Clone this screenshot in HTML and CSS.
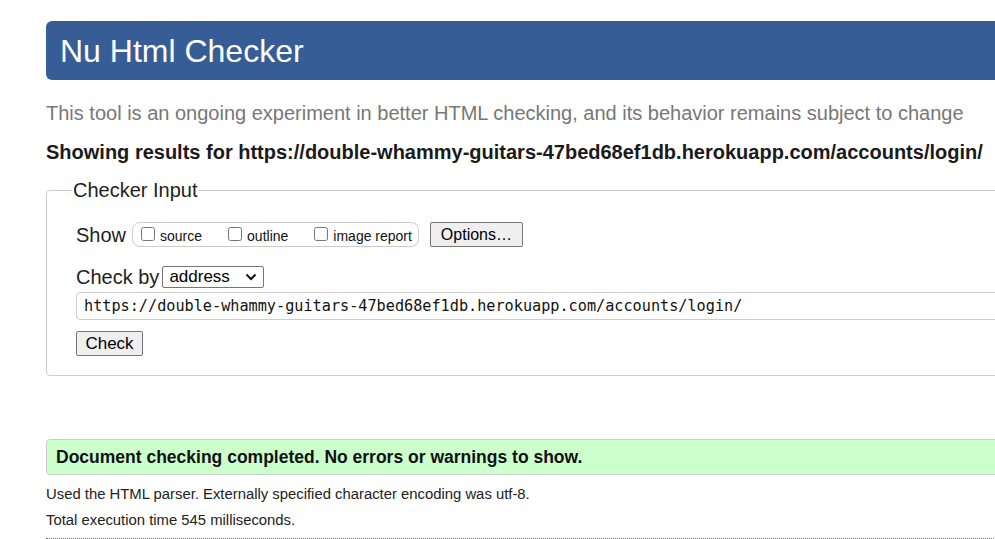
FILE: index.html
```html
<!DOCTYPE html>
<html>
<head>
<meta charset="utf-8">
<title>Nu Html Checker</title>
<link rel="stylesheet" href="styles.css">
</head>
<body>
<div class="page">
  <h1 class="banner">Nu Html Checker</h1>
  <p class="tagline">This tool is an ongoing experiment in better HTML checking, and its behavior remains subject to change</p>
  <p class="results-for">Showing results for https://double-whammy-guitars-47bed68ef1db.herokuapp.com/accounts/login/</p>
  <fieldset class="checker">
    <legend class="checker-legend">Checker Input</legend>
    <div class="row show-row">
      <span class="row-label">Show</span>
      <span class="show-group">
        <label class="opt"><input type="checkbox" class="cb">source</label>
        <label class="opt"><input type="checkbox" class="cb">outline</label>
        <label class="opt"><input type="checkbox" class="cb">image report</label>
      </span>
      <button class="btn options-btn" type="button">Options…</button>
    </div>
    <div class="row checkby-row">
      <span class="row-label">Check by</span>
      <span class="select">address<svg class="chev" width="12" height="8" viewBox="0 0 12 8"><path d="M1.5 1.5 L6 6 L10.5 1.5" fill="none" stroke="#111" stroke-width="2"/></svg></span>
    </div>
    <div class="url-input">https://double-whammy-guitars-47bed68ef1db.herokuapp.com/accounts/login/</div>
    <button class="btn check-btn" type="button">Check</button>
  </fieldset>
  <div class="success">Document checking completed. No errors or warnings to show.</div>
  <p class="details">Used the HTML parser. Externally specified character encoding was utf-8.</p>
  <p class="details">Total execution time 545 milliseconds.</p>
  <div class="dotted"></div>
</div>
</body>
</html>
```

FILE: styles.css
```css
html, body {
  margin: 0;
  padding: 0;
  overflow: hidden;
  background: #fff;
}
body {
  font-family: "Liberation Sans", Arial, sans-serif;
  color: #222;
}
.page {
  width: 1060px;
  padding: 21px 0 0 46px;
}
.banner {
  margin: 0;
  height: 59px;
  background: #365d95;
  color: #fff;
  font-weight: normal;
  font-size: 32px;
  line-height: 60px;
  padding-left: 14px;
  border-radius: 6px;
}
.tagline {
  margin: 21px 0 0 0;
  font-size: 20px;
  line-height: 24px;
  color: #777;
}
.results-for {
  margin: 15px 0 0 0;
  font-size: 20px;
  line-height: 24px;
  font-weight: bold;
  color: #1a1a1a;
}
.checker {
  margin: 15px 0 0 0;
  padding: 21px 0 19px 29px;
  border: 1px solid #ccc;
  border-radius: 4px;
  min-width: 0;
}
.checker-legend {
  font-size: 20px;
  line-height: 22px;
  padding: 0 1px;
  margin-left: -4px;
  color: #222;
}
.row {
  display: flex;
  align-items: center;
}
.row-label {
  font-size: 20px;
  line-height: 24px;
  color: #222;
  margin-right: 6px;
}
.show-group {
  display: flex;
  align-items: center;
  height: 23px;
  border: 1px solid #ccc;
  border-radius: 8px;
  padding: 0 6px 0 7px;
  gap: 25px;
}
.opt {
  display: flex;
  align-items: center;
  font-size: 14px;
  line-height: 16px;
  padding-top: 2px;
  color: #111;
}
.cb {
  margin: -4px 5px 0 1px;
  width: 14px;
  height: 14px;
}
.btn {
  font-family: "Liberation Sans", Arial, sans-serif;
  font-size: 16px;
  color: #000;
  background: #efefef;
  border: 1px solid #767676;
  border-radius: 2px;
  padding: 0 8px;
  height: 25px;
}
.options-btn {
  margin-left: 11px;
  width: 93px;
}
.checkby-row {
  margin-top: 18px;
}
.select {
  display: flex;
  align-items: center;
  justify-content: space-between;
  width: 102px;
  height: 22px;
  border: 1px solid #767676;
  border-radius: 2px;
  font-size: 17px;
  color: #000;
  padding: 0 6px 0 6px;
  box-sizing: border-box;
  margin-left: -3px;
}
.chev {
  display: block;
}
.url-input {
  margin-top: 3px;
  height: 28px;
  box-sizing: border-box;
  border: 1px solid #ccc;
  border-radius: 4px;
  padding: 0 0 0 7px;
  font-family: "DejaVu Sans Mono", "Liberation Mono", monospace;
  font-size: 15.2px;
  line-height: 26px;
  color: #111;
}
.check-btn {
  display: block;
  margin-top: 11px;
  width: 67px;
  height: 25px;
  font-size: 17px;
}
.success {
  margin-top: 63px;
  height: 36px;
  box-sizing: border-box;
  background: #ccffcc;
  border: 1px solid #ccc;
  border-radius: 4px;
  padding-left: 9px;
  font-size: 17.5px;
  font-weight: bold;
  line-height: 34px;
  color: #111;
}
.details {
  margin: 11px 0 0 0;
  font-size: 14.85px;
  line-height: 17px;
  color: #222;
}
.details + .details {
  margin-top: 9px;
}
.dotted {
  margin-top: 9px;
  border-top: 1px dotted #777;
}
```
